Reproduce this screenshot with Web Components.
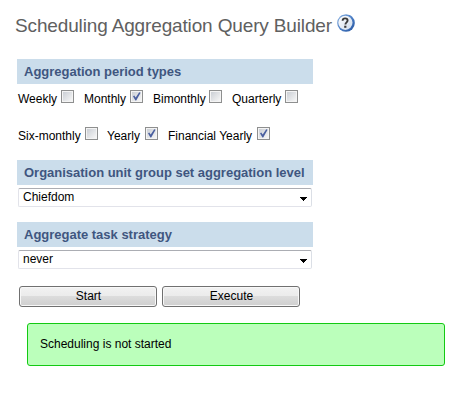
<!DOCTYPE html>
<html lang="en"><head><meta charset="utf-8"><title>Scheduling</title>
<style>body{margin:0;background:#fff;font:12px/15px "Liberation Sans",Arial,sans-serif;color:#000}</style>
</head><body>
<scheduling-page></scheduling-page>
<script>
const define=(name,html)=>customElements.define(name,class extends HTMLElement{
  constructor(){super();this.attachShadow({mode:'open'}).innerHTML=html}
});
define('help-icon',`<style>:host{display:block;width:18px;height:18px}svg{display:block}</style>
<svg width="18" height="18" viewBox="0 0 18 18"><defs><linearGradient id="r" x1="0" y1="0" x2="1" y2="1"><stop stop-color="#8db4e2"/><stop offset=".5" stop-color="#4c7fc6"/><stop offset="1" stop-color="#24529c"/></linearGradient><linearGradient id="f" x1="0" y1="0" x2="1" y2="1"><stop stop-color="#fff"/><stop offset="1" stop-color="#cfdbea"/></linearGradient></defs>
<circle cx="9" cy="9" r="8.8" fill="url(#r)"/><circle cx="8.400" cy="8.800" r="7.100" fill="url(#f)"/>
<path d="M5.600 6.700C5.700 4.900 6.700 4.400 8.100 4.400c1.600 0 2.500.8 2.500 2.100 0 1.800-2.200 1.900-2.200 4" fill="none" stroke="#3a3a3a" stroke-width="1.900"/><rect x="7.200" y="11.700" width="2.200" height="2.100" fill="#3a3a3a"/></svg>`);
define('page-title',`<style>:host{display:flex;height:24px;gap:5px}h1{margin:0;width:317px;white-space:nowrap;font-size:19px;letter-spacing:-.145px;line-height:24px;font-weight:400;color:#606060}</style><h1><slot></slot></h1><help-icon></help-icon>`);
define('section-bar',`<style>:host{display:block;box-sizing:border-box;height:25px;padding-left:7px;background:#cbddeb;color:#3f5680;font-size:13px;letter-spacing:-.01px;line-height:25px;font-weight:700;white-space:nowrap}</style><slot></slot>`);
define('check-item',`<style>:host{display:flex;justify-content:space-between;height:17px;white-space:nowrap}span{padding-top:1px;line-height:16px}
i{box-sizing:border-box;width:13px;height:13px;border:1px solid #8e8f8f;background:linear-gradient(135deg,#cbcfd5,#f6f6f6) content-box,#f4f4f4;padding:1px;box-shadow:inset 0 0 0 1px #f4f4f4}
svg{display:none}:host([checked]) svg{display:block}</style><span><slot></slot></span><i><svg width="9" height="9" viewBox="0 0 9 9"><path d="M1 4.200 2.300 3.600 3.700 5.600 7.200.2 8.600.8 4.200 8.600H3.400Z" fill="#4a5f9f"/></svg></i>`);
define('select-box',`<style>:host{display:flex;box-sizing:border-box;height:19px;border:1px solid #e2e3ea;border-top-color:#abadb3;border-right-color:#dbdfe6;border-radius:2px;padding:0 4px;line-height:17px;justify-content:space-between;align-items:center}svg{margin-top:3px}</style><slot></slot><svg width="7" height="4" viewBox="0 0 7 4" shape-rendering="crispEdges"><path d="M0 0h7v1H6v1H5v1H4v1H3V3H2V2H1V1H0z"/></svg>`);
define('push-button',`<style>:host{display:block;width:138px;height:21px}button{display:block;width:100%;height:100%;box-sizing:border-box;padding:0 0 1px 1px;border:1px solid #707070;border-radius:3px;box-shadow:inset 0 0 0 1px #f8f8f8;background:linear-gradient(#f2f2f2,#ebebeb 49%,#dcdcdc 50%,#cfcfcf);font:inherit;line-height:18px;color:#000}</style><button><slot></slot></button>`);
define('status-message',`<style>:host{display:block;box-sizing:border-box;width:418px;height:43px;border:1px solid #13c913;border-radius:3px;background:#bbffbb;padding:0 12px;line-height:41px}</style><slot></slot>`);
define('scheduling-page',`<style>:host{display:block;padding:14px 0 0 15px}
page-title{margin-bottom:21px}section{width:296px;margin-left:2px}
.checks{display:grid;height:13px;margin:6px 0 0 1px}.one{grid-template-columns:56px 59px 69px 66px;column-gap:10px}.two{margin-top:24px;grid-template-columns:80px 51px 102px;column-gap:9px}.two check-item:last-child{margin-left:1px;margin-right:-1px}
.level{margin-top:20px}.strategy{margin-top:15px}select-box{margin:3px 1px 0}
nav{display:flex;gap:5px;margin:17px 0 0 4px}status-message{margin:16px 0 0 12px}</style>
<page-title>Scheduling Aggregation Query Builder</page-title>
<section><section-bar>Aggregation period types</section-bar>
<div class="checks one"><check-item>Weekly</check-item><check-item checked>Monthly</check-item><check-item>Bimonthly</check-item><check-item>Quarterly</check-item></div>
<div class="checks two"><check-item>Six-monthly</check-item><check-item checked>Yearly</check-item><check-item checked>Financial Yearly</check-item></div></section>
<section class="level"><section-bar>Organisation unit group set aggregation level</section-bar><select-box>Chiefdom</select-box></section>
<section class="strategy"><section-bar>Aggregate task strategy</section-bar><select-box>never</select-box></section>
<nav><push-button>Start</push-button><push-button>Execute</push-button></nav>
<status-message>Scheduling is not started</status-message>`);
</script></body></html>
